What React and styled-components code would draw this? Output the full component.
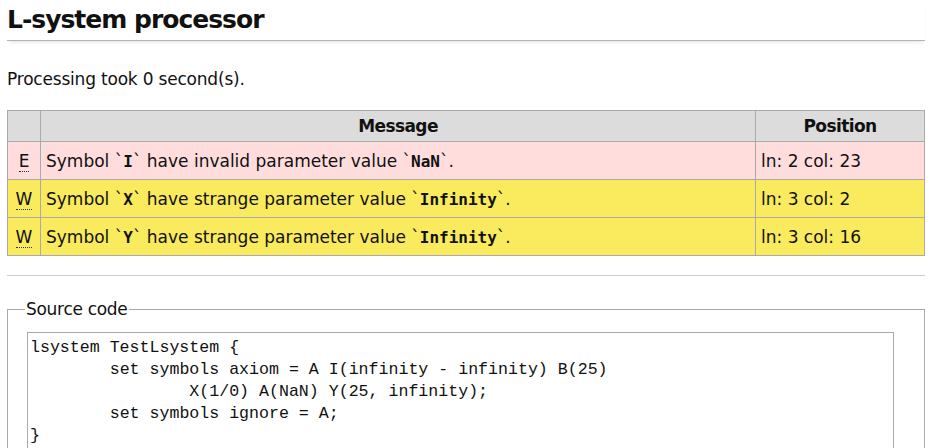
import React from 'react';
import styled, { createGlobalStyle } from 'styled-components';

const GlobalStyle = createGlobalStyle`
  html, body {
    margin: 0;
    padding: 0;
    background: #fff;
  }
  body {
    font-family: "DejaVu Sans", Verdana, sans-serif;
    color: #111;
  }
`;

const Page = styled.div`
  padding: 0 6px 0 7px;
`;

const Title = styled.h1`
  margin: 0;
  padding: 4px 0 4px 0;
  font-size: 25px;
  line-height: 32px;
  font-weight: bold;
  letter-spacing: -1px;
  border-bottom: 1px solid #b4b4b4;
  box-shadow: 0 3px 4px -2px rgba(0, 0, 0, 0.12);
`;

const Note = styled.p`
  margin: 28px 0 0 0;
  font-size: 17px;
  line-height: 20px;
  letter-spacing: -0.2px;
`;

const Table = styled.table`
  margin-top: 21px;
  width: 100%;
  border-collapse: collapse;
  font-size: 17px;
`;

const Th = styled.th`
  background: #dcdcdc;
  border: 1px solid #aaa;
  height: 30px;
  padding: 0 6px;
  font-weight: bold;
  letter-spacing: -0.6px;
  text-align: center;
  width: ${p => p.w || 'auto'};
`;

const Row = styled.tr`
  background: ${p => (p.level === 'E' ? '#ffdddd' : '#f9ea5e')};
`;

const Td = styled.td`
  border: 1px solid #aaa;
  height: 37px;
  padding: 0 5px;
  text-align: ${p => (p.center ? 'center' : 'left')};
`;

const Level = styled.abbr`
  text-decoration: none;
  border-bottom: 1px dotted #333;
  cursor: help;
`;

const Code = styled.code`
  font-family: "DejaVu Sans Mono", "Liberation Mono", monospace;
  font-weight: bold;
  font-size: 16px;
`;

const Rule = styled.hr`
  margin: 19px 0 0 0;
  border: 0;
  border-top: 1px solid #ccc;
`;

const Fieldset = styled.fieldset`
  margin: 23px 0 0 0;
  padding: 13px 19px 0 19px;
  border: 1px solid #aaa;
  border-bottom: 0;
`;

const Legend = styled.legend`
  margin-left: -2px;
  padding: 0 1px;
  font-size: 17px;
  line-height: 20px;
  letter-spacing: -0.3px;
`;

const Source = styled.textarea`
  display: block;
  box-sizing: border-box;
  width: 867px;
  height: 120px;
  margin: 0;
  padding: 4px 2px;
  border: 1px solid #aaa;
  border-bottom: 0;
  resize: none;
  overflow: hidden;
  font-family: "Liberation Mono", "DejaVu Sans Mono", monospace;
  font-size: 16.6px;
  line-height: 22px;
  tab-size: 8;
  color: #111;
  background: #fff;
`;

const messages = [
  { level: 'E', title: 'Error', symbol: 'I', kind: 'invalid', value: 'NaN', pos: 'ln: 2 col: 23' },
  { level: 'W', title: 'Warning', symbol: 'X', kind: 'strange', value: 'Infinity', pos: 'ln: 3 col: 2' },
  { level: 'W', title: 'Warning', symbol: 'Y', kind: 'strange', value: 'Infinity', pos: 'ln: 3 col: 16' },
];

const source = `lsystem TestLsystem {
\tset symbols axiom = A I(infinity - infinity) B(25)
\t\tX(1/0) A(NaN) Y(25, infinity);
\tset symbols ignore = A;
}`;

export default function App() {
  return (
    <>
      <GlobalStyle />
      <Page>
        <Title>L-system processor</Title>
        <Note>Processing took 0 second(s).</Note>
        <Table>
          <thead>
            <tr>
              <Th w="20px"></Th>
              <Th>Message</Th>
              <Th w="156px">Position</Th>
            </tr>
          </thead>
          <tbody>
            {messages.map((m, i) => (
              <Row key={i} level={m.level}>
                <Td center>
                  <Level title={m.title}>{m.level}</Level>
                </Td>
                <Td>
                  Symbol `<Code>{m.symbol}</Code>` have {m.kind} parameter value `<Code>{m.value}</Code>`.
                </Td>
                <Td>{m.pos}</Td>
              </Row>
            ))}
          </tbody>
        </Table>
        <Rule />
        <Fieldset>
          <Legend>Source code</Legend>
          <Source readOnly value={source} />
        </Fieldset>
      </Page>
    </>
  );
}
